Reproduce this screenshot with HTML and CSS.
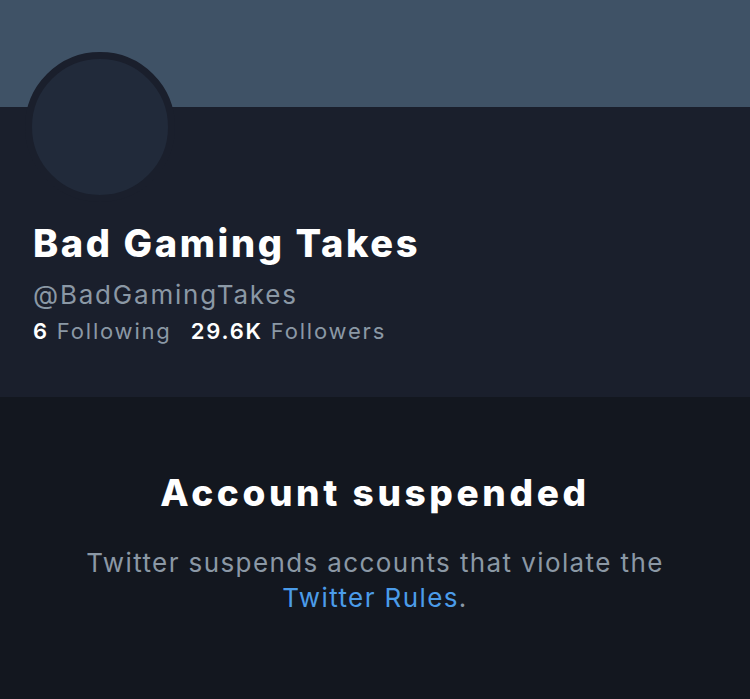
FILE: index.html
```html
<!DOCTYPE html>
<html lang="en">
<head>
<meta charset="utf-8">
<title>Bad Gaming Takes</title>
<link rel="stylesheet" href="styles.css">
</head>
<body>
<div class="page">
  <div class="banner"></div>
  <section class="profile">
    <div class="avatar"></div>
    <h1 class="name">Bad Gaming Takes</h1>
    <div class="handle">@BadGamingTakes</div>
    <div class="stats">
      <span class="stat"><b>6</b> Following</span>
      <span class="stat"><b>29.6K</b> Followers</span>
    </div>
  </section>
  <section class="suspended">
    <h2 class="title">Account suspended</h2>
    <p class="desc">Twitter suspends accounts that violate the <a class="link" href="#">Twitter Rules</a>.</p>
  </section>
</div>
</body>
</html>
```
FILE: styles.css
```css
html, body {
  margin: 0;
  padding: 0;
  background: #13171f;
}
.page {
  width: 750px;
  height: 699px;
  display: flex;
  flex-direction: column;
  font-family: Inter, "Noto Sans", sans-serif;
  overflow: hidden;
}
.banner {
  height: 107px;
  background: #3f5266;
  flex: none;
}
.profile {
  height: 290px;
  flex: none;
  background: #1a1f2c;
  padding-left: 33px;
  box-sizing: border-box;
  display: flex;
  flex-direction: column;
  align-items: flex-start;
}
.avatar {
  width: 150px;
  height: 150px;
  box-sizing: border-box;
  border-radius: 50%;
  border: 7px solid #1a1f2c;
  background: #212a3a;
  margin-top: -55px;
  margin-left: -8px;
}
.name {
  margin: 19px 0 0;
  font-size: 38px;
  line-height: 44px;
  font-weight: 800;
  color: #ffffff;
  letter-spacing: 2.6px;
}
.handle {
  margin-top: 13px;
  font-size: 26px;
  line-height: 34px;
  color: #8b98a5;
  letter-spacing: 1.8px;
}
.stats {
  margin-top: 4px;
  display: flex;
  gap: 19px;
  font-size: 22px;
  line-height: 30px;
  color: #8b98a5;
  letter-spacing: 1.8px;
}
.stat b {
  color: #ffffff;
  font-weight: 600;
}
.suspended {
  flex: 1;
  background: #13171f;
  text-align: center;
  padding-top: 74px;
}
.title {
  margin: 0;
  font-size: 37px;
  line-height: 44px;
  font-weight: 800;
  color: #ffffff;
  letter-spacing: 3.6px;
}
.desc {
  margin: 30px auto 0;
  width: 640px;
  font-size: 26px;
  line-height: 35px;
  color: #8b98a5;
  letter-spacing: 1.4px;
}
.link {
  color: #4b9ce9;
  text-decoration: none;
}
```
